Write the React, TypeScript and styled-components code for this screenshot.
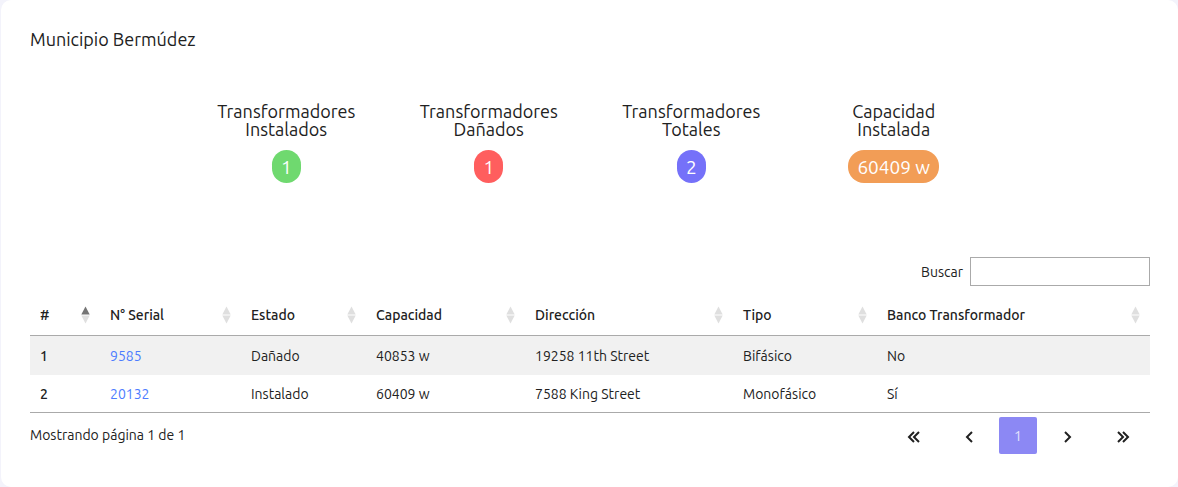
import React from "react";
import styled, { createGlobalStyle } from "styled-components";

const GlobalStyle = createGlobalStyle`
  * { box-sizing: border-box; }
  body {
    margin: 0;
    background: #f3f3fb;
    color: #212121;
    font-family: Ubuntu, "Noto Sans", "Open Sans", sans-serif;
    font-size: 14px;
    line-height: 20px;
  }
`;

const Card = styled.main`
  margin-left: 1px;
  padding: 27px 28px 33px 29px;
  border-radius: 10px;
  background: #fff;
`;

const Title = styled.h1`
  margin: 0;
  font-size: 18px;
  font-weight: 400;
  line-height: 24px;
`;

const Stats = styled.section`
  display: grid;
  grid-template-columns: repeat(4, 1fr);
  margin: 51px 0 74px;
  padding: 0 155px;
`;

const Stat = styled.div`
  display: flex;
  flex-direction: column;
  align-items: center;
  gap: 12px;
`;

const StatLabel = styled.h2`
  width: min-content;
  margin: 0;
  font-size: 18px;
  font-weight: 400;
  line-height: 18px;
  text-align: center;
`;

const Pill = styled.span<{ $color: string }>`
  padding: 1px 9px 0;
  border-radius: 16px;
  background: ${(p) => p.$color};
  color: #fff;
  font-size: 19px;
  line-height: 32px;
`;

const Search = styled.div`
  display: flex;
  justify-content: flex-end;
  align-items: center;
  gap: 7px;
`;

const SearchInput = styled.input`
  width: 180px;
  height: 29px;
  padding: 0 5px;
  border: 1px solid #aaa;
  border-radius: 0;
  background: #fff;
  font: inherit;
`;

const Table = styled.table`
  width: 100%;
  margin-top: 9px;
  border-collapse: separate;
  border-spacing: 0;
  table-layout: fixed;
`;

const HeadCell = styled.th<{ $share: number }>`
  width: ${(p) => (p.$share / 1120) * 100}%;
  height: 41px;
  padding: 0 10px;
  border-bottom: 1px solid #aaa;
  font-weight: 500;
  text-align: left;
`;

const SortButton = styled.button`
  display: flex;
  justify-content: space-between;
  align-items: center;
  width: 100%;
  padding: 0;
  border: 0;
  background: none;
  color: inherit;
  font: inherit;
  white-space: nowrap;
  cursor: pointer;
`;

const Row = styled.tr`
  &:nth-child(odd) { background: #f1f1f1; }
  &:first-child > * { height: 39px; }
  &:last-child > * { border-bottom: 1px solid #aaa; }
`;

const Cell = styled.td`
  height: 38px;
  padding: 0 10px;
`;

const RowHead = styled.th`
  height: 38px;
  padding: 0 10px;
  font-weight: 500;
  text-align: left;
`;

const SerialLink = styled.a`
  color: #4d7cff;
  text-decoration: none;
`;

const Footer = styled.footer`
  display: flex;
  justify-content: space-between;
  align-items: flex-start;
  padding: 4px 1px 0 0;
`;

const PageInfo = styled.p`
  margin: 8px 0 0;
`;

const Pagination = styled.nav`
  display: flex;
  gap: 3px;
`;

const PageButton = styled.button<{ $active?: boolean }>`
  display: flex;
  align-items: center;
  justify-content: center;
  width: ${(p) => (p.$active ? 38 : 53)}px;
  height: 37px;
  padding: 0;
  border: 0;
  border-radius: 2px;
  background: ${(p) => (p.$active ? "#8c88f4" : "transparent")};
  color: ${(p) => (p.$active ? "#e4e3fd" : "#212121")};
  font: inherit;
  cursor: pointer;

  svg { margin-top: 3px; }
`;

const Icon = ({ d }: { d: string }) => (
  <svg width="24" height="24" viewBox="0 0 24 24" fill="currentColor" aria-hidden="true">
    <path d={d} />
  </svg>
);

const SortIcon = ({ ascending }: { ascending?: boolean }) => (
  <svg width="9" height="18" viewBox="0 0 9 18" aria-hidden="true">
    <path d="M4.5 0.5 8.7 8.5H.3z" fill={ascending ? "#757575" : "#dfdfdf"} />
    <path d="M4.5 17.5 8.7 9.5H.3z" fill="#dfdfdf" />
  </svg>
);

const stats = [
  { label: "Transformadores Instalados", value: "1", color: "#6fd96f" },
  { label: "Transformadores Dañados", value: "1", color: "#ff5e5e" },
  { label: "Transformadores Totales", value: "2", color: "#7571f9" },
  { label: "Capacidad Instalada", value: "60409 w", color: "#f29d56" },
];

const columns = [
  { label: "#", share: 70 },
  { label: "N° Serial", share: 141 },
  { label: "Estado", share: 125 },
  { label: "Capacidad", share: 159 },
  { label: "Dirección", share: 208 },
  { label: "Tipo", share: 144 },
  { label: "Banco Transformador", share: 273 },
];

const rows = [
  { serial: "9585", cells: ["Dañado", "40853 w", "19258 11th Street", "Bifásico", "No"] },
  { serial: "20132", cells: ["Instalado", "60409 w", "7588 King Street", "Monofásico", "Sí"] },
];

export default function App() {
  return (
    <>
      <GlobalStyle />
      <Card>
        <Title>Municipio Bermúdez</Title>
        <Stats>
          {stats.map((s) => (
            <Stat key={s.label}>
              <StatLabel>{s.label}</StatLabel>
              <Pill $color={s.color}>{s.value}</Pill>
            </Stat>
          ))}
        </Stats>
        <Search>
          <label htmlFor="buscar">Buscar</label>
          <SearchInput id="buscar" type="search" />
        </Search>
        <Table>
          <thead>
            <tr>
              {columns.map((c, i) => (
                <HeadCell key={c.label} $share={c.share} scope="col" aria-sort={i === 0 ? "ascending" : undefined}>
                  <SortButton type="button">
                    {c.label}
                    <SortIcon ascending={i === 0} />
                  </SortButton>
                </HeadCell>
              ))}
            </tr>
          </thead>
          <tbody>
            {rows.map((r, i) => (
              <Row key={r.serial}>
                <RowHead scope="row">{i + 1}</RowHead>
                <Cell><SerialLink href={`#${r.serial}`}>{r.serial}</SerialLink></Cell>
                {r.cells.map((c) => <Cell key={c}>{c}</Cell>)}
              </Row>
            ))}
          </tbody>
        </Table>
        <Footer>
          <PageInfo>Mostrando página 1 de 1</PageInfo>
          <Pagination aria-label="Paginación">
            <PageButton type="button" aria-label="Primera">
              <Icon d="m12.707 7.707-1.414-1.414L5.586 12l5.707 5.707 1.414-1.414L8.414 12zM16.293 6.293 10.586 12l5.707 5.707 1.414-1.414L13.414 12l4.293-4.293z" />
            </PageButton>
            <PageButton type="button" aria-label="Anterior">
              <Icon d="M13.293 6.293 7.586 12l5.707 5.707 1.414-1.414L10.414 12l4.293-4.293z" />
            </PageButton>
            <PageButton type="button" $active aria-current="page">1</PageButton>
            <PageButton type="button" aria-label="Siguiente">
              <Icon d="M10.707 17.707 16.414 12l-5.707-5.707-1.414 1.414L13.586 12l-4.293 4.293z" />
            </PageButton>
            <PageButton type="button" aria-label="Última">
              <Icon d="m11.293 7.707 1.414-1.414L18.414 12l-5.707 5.707-1.414-1.414L15.586 12zM7.707 6.293 13.414 12l-5.707 5.707-1.414-1.414L10.586 12 6.293 7.707z" />
            </PageButton>
          </Pagination>
        </Footer>
      </Card>
    </>
  );
}
